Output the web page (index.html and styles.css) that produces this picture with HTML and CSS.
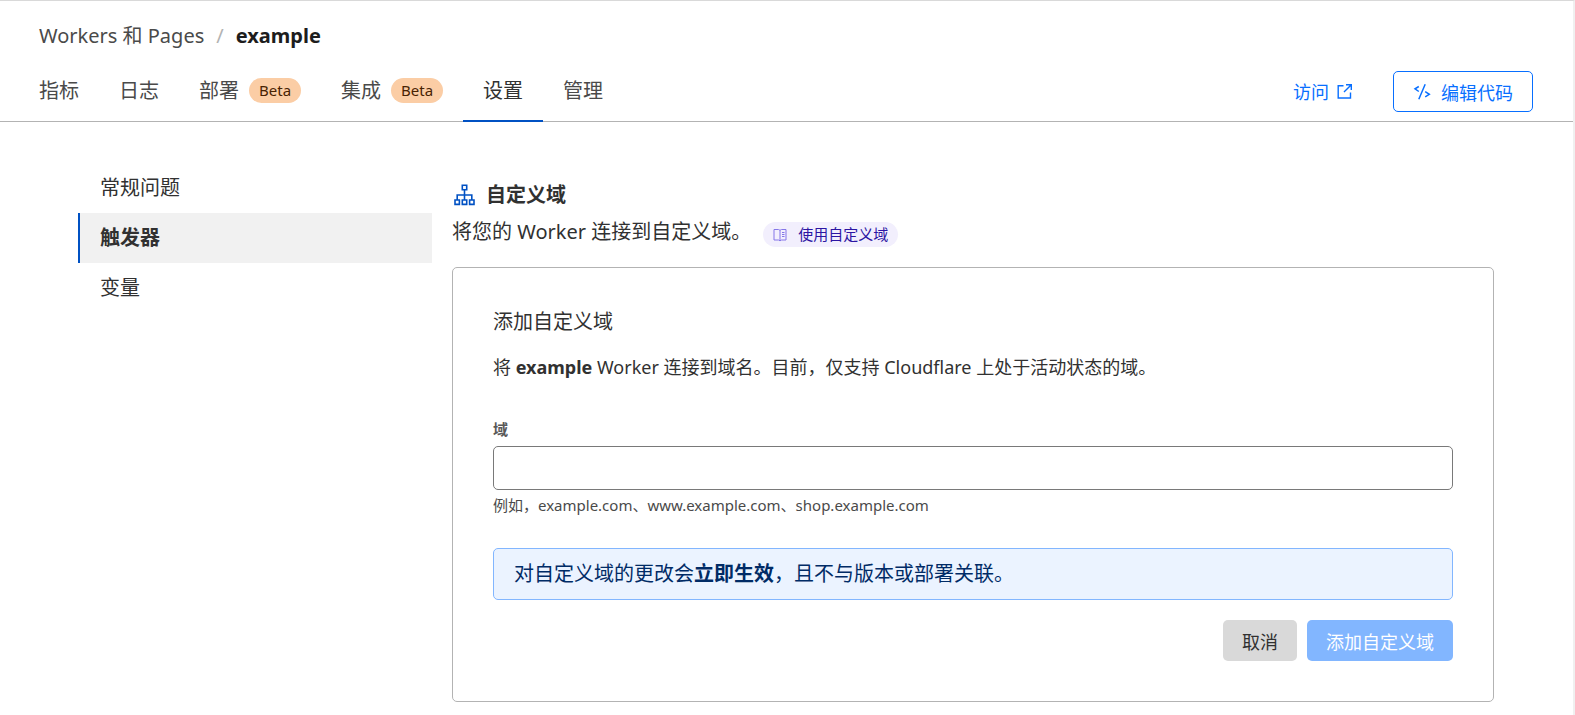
FILE: index.html
```html
<!DOCTYPE html>
<html lang="zh-CN">
<head>
<meta charset="utf-8">
<meta name="viewport" content="width=device-width, initial-scale=1">
<title>Workers 和 Pages / example</title>
<link rel="stylesheet" href="styles.css">
</head>
<body>
<header class="header">
  <nav class="breadcrumb" aria-label="路径">
    <a class="crumb" href="#">Workers 和 Pages</a>
    <span class="crumb-sep">/</span>
    <strong class="crumb-current">example</strong>
  </nav>
  <div class="header-row">
    <nav class="tabs" aria-label="选项卡">
      <a class="tab" href="#">指标</a>
      <a class="tab" href="#">日志</a>
      <a class="tab" href="#">部署<span class="beta">Beta</span></a>
      <a class="tab" href="#">集成<span class="beta">Beta</span></a>
      <a class="tab tab-active" href="#" aria-current="page">设置</a>
      <a class="tab" href="#">管理</a>
    </nav>
    <div class="header-actions">
      <a class="visit" href="#">访问
        <svg width="16" height="18" viewBox="0 0 16 18" fill="none" stroke="currentColor" stroke-width="1.4" aria-hidden="true"><path d="M6.500 2.700H1.200v12.300h12.300V9.500M9 1.700h5.300V7M14.300 1.700L7 9"/></svg>
      </a>
      <button class="btn btn-outline" type="button">
        <svg width="18" height="18" viewBox="0 0 18 18" fill="none" stroke="currentColor" stroke-width="1.5" aria-hidden="true"><path d="M5.800 3.500L2 5.900l3.800 2.600M12.200 8.700l4.100 2.600-4.100 2.600M12.200 1.200L5.800 16.300"/></svg>
        编辑代码
      </button>
    </div>
  </div>
</header>
<div class="layout">
  <nav class="side" aria-label="设置">
    <a class="side-item" href="#">常规问题</a>
    <a class="side-item side-active" href="#" aria-current="page">触发器</a>
    <a class="side-item" href="#">变量</a>
  </nav>
  <main class="main">
    <h1 class="title">
      <svg class="title-icon" width="24" height="24" viewBox="0 0 24 24" fill="none" stroke="currentColor" stroke-width="1.6" aria-hidden="true"><path d="M10.300 2.300h4.400v4.400h-4.400zM3 17h4.400v4.400H3zM10.300 17h4.400v4.400h-4.400zM17.600 17H22v4.400h-4.400zM12.500 6.700V17M5.200 17v-5h14.600v5"/></svg>
      自定义域
    </h1>
    <div class="intro">
      <p class="intro-text">将您的 Worker 连接到自定义域。</p>
      <a class="docs" href="#">
        <svg width="14" height="14" viewBox="0 0 14 14" fill="none" stroke="currentColor" aria-hidden="true"><path d="M1 1.500h4.500l1.500.8 1.500-.8H13v10.500H8.500l-1.500.8-1.500-.8H1zM7 2.300v10.500M9 4.500h2.500M9 6.500h2.500M9 8.500h2.500"/></svg>
        使用自定义域
      </a>
    </div>
    <form class="card">
      <h2 class="card-title">添加自定义域</h2>
      <p class="card-text">将 <strong>example</strong> Worker 连接到域名。目前，仅支持 Cloudflare 上处于活动状态的域。</p>
      <label class="label" for="domain">域</label>
      <input class="input" id="domain" type="text" aria-describedby="hint">
      <p class="hint" id="hint">例如，example.com、www.example.com、shop.example.com</p>
      <p class="alert">对自定义域的更改会<strong>立即生效</strong>，且不与版本或部署关联。</p>
      <div class="actions">
        <button class="btn btn-cancel" type="button">取消</button>
        <button class="btn btn-primary" type="submit" disabled>添加自定义域</button>
      </div>
    </form>
  </main>
</div>
</body>
</html>
```
FILE: styles.css
```css
* {
  box-sizing: border-box;
}

body {
  margin: 0;
  min-height: 100vh;
  border-top: 1px solid #d9d9d9;
  border-right: 2px solid #f0f0f0;
  background: #fff;
  color: #313131;
  font-family: "Noto Sans", "Noto Sans CJK SC", sans-serif;
  font-size: 20px;
  line-height: 30px;
}

a {
  color: inherit;
  text-decoration: none;
}

h1,
h2,
p {
  margin: 0;
}

svg {
  flex: none;
}

.header {
  padding: 20px 40px 0 19px;
  border-bottom: 1px solid #b3b3b3;
}

.breadcrumb {
  display: flex;
  gap: 12px;
  padding-left: 20px;
}

.crumb {
  color: #4a4a4a;
}

.crumb-sep {
  color: #b3b3b3;
}

.crumb-current {
  color: #1d1d1d;
}

.header-row {
  display: flex;
  justify-content: space-between;
  align-items: flex-start;
}

.tabs {
  display: flex;
  margin-bottom: -1px;
}

.tab {
  display: flex;
  align-items: center;
  gap: 10px;
  height: 71px;
  padding: 10px 20px 0;
  border-bottom: 2px solid transparent;
  color: #4a4a4a;
}

.tab-active {
  border-color: #0051c3;
  color: #313131;
}

.beta {
  padding: 0 10px;
  border-radius: 13px;
  background: #fbcda5;
  color: #482303;
  font-size: 15px;
  line-height: 25px;
}

.header-actions {
  display: flex;
  align-items: center;
  gap: 40px;
  margin-top: 20px;
}

.visit {
  display: flex;
  align-items: center;
  gap: 8px;
  color: #086fff;
  font-size: 18px;
}

.btn {
  display: flex;
  align-items: center;
  gap: 10px;
  height: 41px;
  padding: 0 19px;
  border: 0;
  border-radius: 5px;
  font-family: inherit;
  font-size: 18px;
}

.btn-outline {
  border: 1px solid #086fff;
  background: #fff;
  color: #086fff;
}

.btn-cancel {
  background: #d9d9d9;
  color: #313131;
}

.btn-primary {
  background: #82b6ff;
  color: #fff;
}

.layout {
  display: grid;
  grid-template-columns: 25% minmax(0, 1fr);
  gap: 20px;
  padding: 41px 79px 0 78px;
}

.side-item {
  display: block;
  padding: 10px 20px;
  border-left: 2px solid transparent;
}

.side-active {
  border-color: #0051c3;
  background: #f1f1f1;
  font-weight: 700;
}

.main {
  padding-top: 17px;
}

.title {
  display: flex;
  align-items: center;
  gap: 10px;
  font-size: 20px;
  font-weight: 700;
}

.title-icon {
  color: #0051c3;
}

.intro {
  display: flex;
  align-items: flex-end;
  gap: 12px;
  padding: 7px 0 20px;
}

.docs {
  display: flex;
  align-items: center;
  gap: 11px;
  padding: 0 10px;
  border-radius: 13px;
  background: #f2effd;
  color: #2c15a3;
  font-size: 15px;
  line-height: 25px;
}

.docs svg {
  color: #8577e8;
}

.card {
  padding: 39px 40px 40px;
  border: 1px solid #b3b3b3;
  border-radius: 5px;
}

.card-title {
  font-size: 20px;
  font-weight: 400;
}

.card-text {
  padding: 15px 0 32px;
  font-size: 18px;
}

.label {
  display: block;
  margin-bottom: 2px;
  color: #595959;
  font-size: 15px;
  font-weight: 700;
}

.input {
  display: block;
  width: 100%;
  height: 44px;
  padding: 0 10px;
  border: 1px solid #797979;
  border-radius: 5px;
  background: #fff;
  font: inherit;
}

.hint {
  color: #4a4a4a;
  font-size: 15px;
}

.alert {
  margin: 28px 0 20px;
  padding: 10px 20px;
  border: 1px solid #82b6ff;
  border-radius: 5px;
  background: #ebf3ff;
  color: #002b66;
}

.actions {
  display: flex;
  justify-content: flex-end;
  gap: 10px;
}
```
